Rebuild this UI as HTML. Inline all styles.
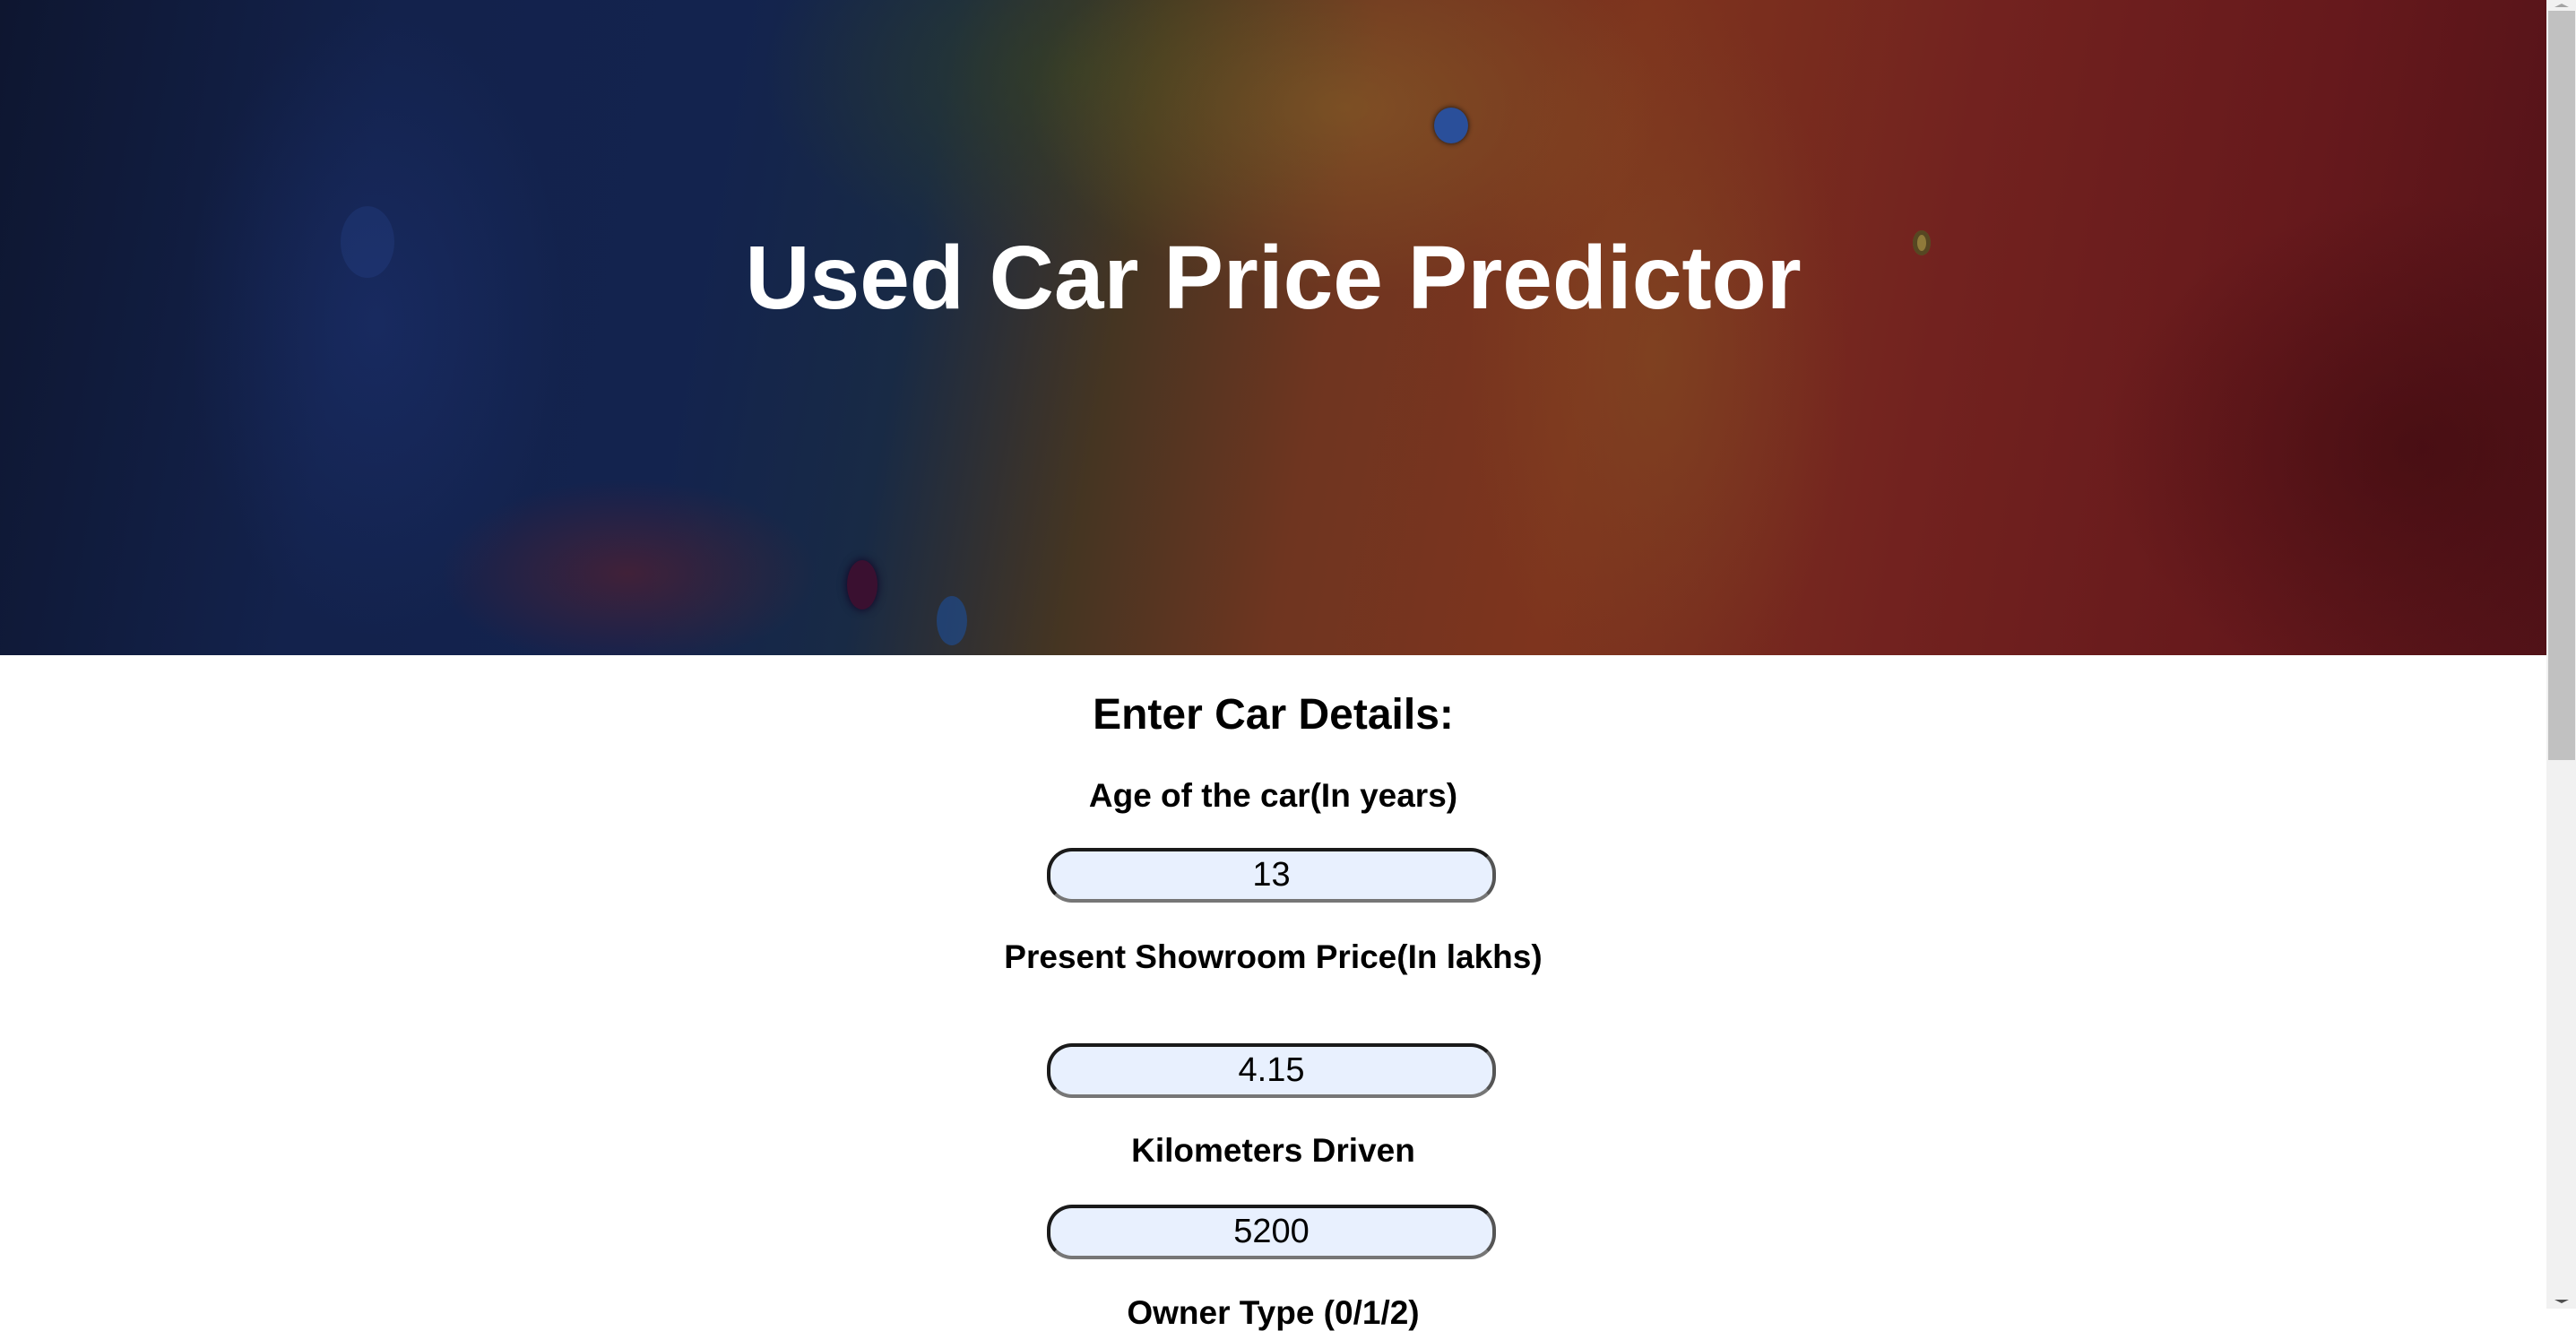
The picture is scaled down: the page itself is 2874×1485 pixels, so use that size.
<!DOCTYPE html>
<html><head><meta charset="utf-8"><style>
html,body{margin:0;padding:0;}
body{width:2874px;height:1460px;overflow:hidden;position:relative;background:#fff;font-family:"Liberation Sans",Arial,sans-serif;}
.banner{position:absolute;left:0;top:0;width:2841px;height:731px;overflow:hidden;
background:
radial-gradient(ellipse 300px 500px at 420px 360px, rgba(35,60,140,0.3), rgba(35,60,140,0) 70%),
radial-gradient(ellipse 500px 300px at 1500px 120px, rgba(140,100,40,0.55), rgba(140,100,40,0) 70%),
radial-gradient(ellipse 300px 600px at 1850px 400px, rgba(130,80,35,0.5), rgba(130,80,35,0) 70%),
radial-gradient(ellipse 300px 150px at 700px 640px, rgba(120,30,30,0.45), rgba(120,30,30,0) 70%),
radial-gradient(ellipse 500px 400px at 2700px 500px, rgba(60,10,15,0.6), rgba(60,10,15,0) 70%),
radial-gradient(ellipse 500px 300px at 1200px 80px, rgba(55,70,30,0.55), rgba(55,70,30,0) 70%),
linear-gradient(100deg,#0e1630 0%,#13224c 15%,#13234e 28%,#182a45 36%,#453522 44%,#6f3520 52%,#7e341e 62%,#72221f 75%,#66191c 88%,#521218 100%);}
.dot{position:absolute;border-radius:50%;}
.title{position:absolute;left:0;width:2841px;top:260px;text-align:center;font-size:100px;line-height:100px;font-weight:bold;color:#fff;}
.h{position:absolute;left:0;width:2841px;text-align:center;font-weight:bold;color:#000;}
.h2{top:774px;font-size:48px;line-height:48px;}
.lab{font-size:37px;line-height:37px;}
.inp{position:absolute;left:1168px;width:493px;height:53px;border-radius:28px;background:#e8f0fe;
border:4px solid #1a1a1a;border-bottom-color:#767676;border-right-color:#555;
font-size:38px;line-height:53px;text-align:center;color:#000;}
.sb{position:absolute;left:2841px;top:0;width:33px;height:1460px;background:#f1f1f1;}
.thumb{position:absolute;left:2px;top:12px;width:30px;height:836px;background:#c1c1c1;}
</style></head><body>
<div class="banner">
<div class="dot" style="left:1600px;top:120px;width:38px;height:40px;background:#2a4f9a;box-shadow:0 0 6px #111;"></div>
<div class="dot" style="left:2134px;top:257px;width:20px;height:28px;background:#8f7a3a;box-shadow:0 0 0 5px rgba(30,20,10,.5) inset;"></div>
<div class="dot" style="left:945px;top:625px;width:34px;height:55px;background:#3a1030;box-shadow:0 0 10px #102;"></div>
<div class="dot" style="left:1045px;top:665px;width:34px;height:55px;background:#1d4e9a;opacity:.6;"></div>
<div class="dot" style="left:380px;top:230px;width:60px;height:80px;background:#2a4a9a;opacity:.25;"></div>
</div>
<div class="title">Used Car Price Predictor</div>
<div class="h h2">Enter Car Details:</div>
<div class="h lab" style="top:869px;">Age of the car(In years)</div>
<div class="inp" style="top:946px;">13</div>
<div class="h lab" style="top:1049px;">Present Showroom Price(In lakhs)</div>
<div class="inp" style="top:1164px;">4.15</div>
<div class="h lab" style="top:1265px;">Kilometers Driven</div>
<div class="inp" style="top:1344px;">5200</div>
<div class="h lab" style="top:1446px;">Owner Type (0/1/2)</div>
<div class="sb"><div class="thumb"></div>
<div style="position:absolute;left:9px;top:4px;width:0;height:0;border-left:8px solid transparent;border-right:8px solid transparent;border-bottom:4px solid #a3a3a3;"></div>
<div style="position:absolute;left:9px;top:1450px;width:0;height:0;border-left:8px solid transparent;border-right:8px solid transparent;border-top:4px solid #505050;"></div>
</div>
</body></html>
